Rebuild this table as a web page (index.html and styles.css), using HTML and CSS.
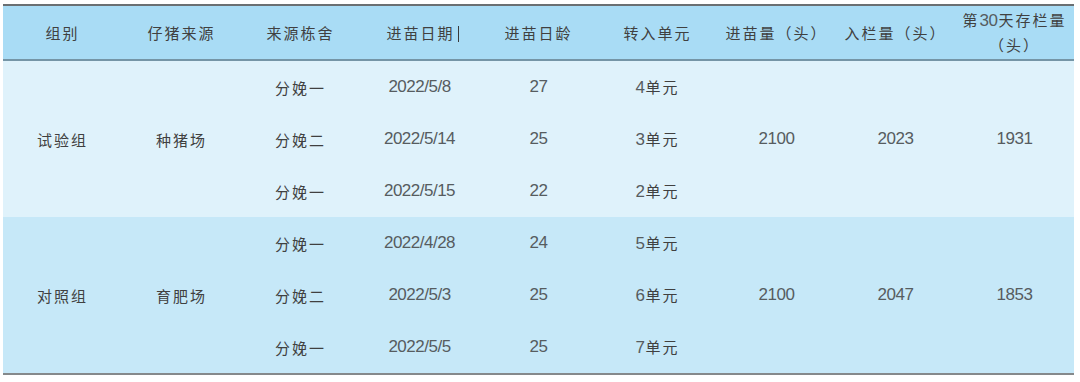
FILE: index.html
```html
<!DOCTYPE html>
<html lang="zh-CN">
<head>
<meta charset="utf-8">
<link rel="stylesheet" href="styles.css">
</head>
<body>
<div class="wrap">
<table class="data">
  <colgroup>
    <col><col><col><col><col><col><col><col><col>
  </colgroup>
  <thead>
    <tr>
      <th>组别</th>
      <th>仔猪来源</th>
      <th>来源栋舍</th>
      <th>进苗日期<span class="caret"></span></th>
      <th>进苗日龄</th>
      <th>转入单元</th>
      <th>进苗量（头）</th>
      <th>入栏量（头）</th>
      <th class="two">第<span class="num">30</span>天存栏量<br>（头）</th>
    </tr>
  </thead>
  <tbody class="g1">
    <tr>
      <td rowspan="3">试验组</td>
      <td rowspan="3">种猪场</td>
      <td>分娩一</td>
      <td class="num">2022/5/8</td>
      <td class="num">27</td>
      <td><span class="num">4</span>单元</td>
      <td rowspan="3" class="num">2100</td>
      <td rowspan="3" class="num">2023</td>
      <td rowspan="3" class="num">1931</td>
    </tr>
    <tr>
      <td>分娩二</td>
      <td class="num">2022/5/14</td>
      <td class="num">25</td>
      <td><span class="num">3</span>单元</td>
    </tr>
    <tr>
      <td>分娩一</td>
      <td class="num">2022/5/15</td>
      <td class="num">22</td>
      <td><span class="num">2</span>单元</td>
    </tr>
  </tbody>
  <tbody class="g2">
    <tr>
      <td rowspan="3">对照组</td>
      <td rowspan="3">育肥场</td>
      <td>分娩一</td>
      <td class="num">2022/4/28</td>
      <td class="num">24</td>
      <td><span class="num">5</span>单元</td>
      <td rowspan="3" class="num">2100</td>
      <td rowspan="3" class="num">2047</td>
      <td rowspan="3" class="num">1853</td>
    </tr>
    <tr>
      <td>分娩二</td>
      <td class="num">2022/5/3</td>
      <td class="num">25</td>
      <td><span class="num">6</span>单元</td>
    </tr>
    <tr>
      <td>分娩一</td>
      <td class="num">2022/5/5</td>
      <td class="num">25</td>
      <td><span class="num">7</span>单元</td>
    </tr>
  </tbody>
</table>
</div>
</body>
</html>
```

FILE: styles.css
```css
html, body {
  margin: 0;
  padding: 0;
  background: #ffffff;
}

.wrap {
  padding: 4px 0 0 3px;
}

.data {
  width: 1071px;
  table-layout: fixed;
  border-collapse: collapse;
  border-spacing: 0;
  font-family: "Noto Sans CJK SC", "Liberation Sans", sans-serif;
  font-size: 15px;
  color: #404040;
  letter-spacing: 2px;
}

.data col {
  width: 119px;
}

.data thead tr {
  background: #a9dcf5;
  border-top: 2px solid #6a6f72;
  border-bottom: 2px solid #7595a6;
}

.data th {
  height: 53px;
  padding: 0;
  font-weight: 400;
  text-align: center;
  vertical-align: middle;
  line-height: 24px;
  white-space: nowrap;
}

.caret {
  display: inline-block;
  width: 1px;
  height: 16px;
  background: #3a3a3a;
  vertical-align: -3px;
  margin-left: 3px;
  margin-right: -6px;
}

.data td {
  padding: 0;
  height: 52px;
  text-align: center;
  vertical-align: middle;
  white-space: nowrap;
}

.g1 {
  background: #dff2fb;
}

.g2 {
  background: #c6e8f8;
  border-bottom: 2px solid #85898b;
}

.num {
  font-family: "Liberation Sans", "Noto Sans CJK SC", sans-serif;
  font-size: 17px;
  letter-spacing: -0.5px;
  color: #565c60;
}

td .num, th .num {
  margin-right: 1px;
}
```
